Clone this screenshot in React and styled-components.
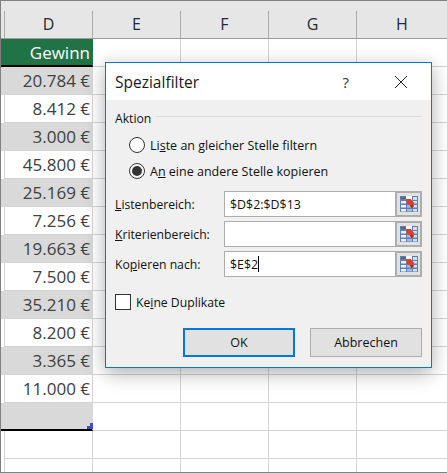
import React from 'react';
import styled, { createGlobalStyle } from 'styled-components';

const GlobalStyle = createGlobalStyle`
  html, body { margin: 0; padding: 0; background: #fff; }
  body { font-family: 'Open Sans', 'Noto Sans', sans-serif; }
`;

const values = ['20.784 €', '8.412 €', '3.000 €', '45.800 €', '25.169 €', '7.256 €', '19.663 €', '7.500 €', '35.210 €', '8.200 €', '3.365 €', '11.000 €'];
const columns = ['D', 'E', 'F', 'G', 'H'];

function RefIcon() {
    return (
        <svg width="18" height="16" viewBox="0 0 18 16">
            <rect x="0" y="0" width="18" height="16" fill="#5f80b4" />
            <rect x="1" y="1" width="5" height="2" fill="#5d6670" />
            <rect x="6" y="0" width="6" height="4" fill="#fafcfe" />
            <rect x="13" y="1" width="4" height="3" fill="#cfe0f2" />
            {[5, 9, 13].map(y => (
                <React.Fragment key={y}>
                    <rect x="1" y={y} width="5" height="2.5" fill="#eef3f9" />
                    <rect x="7" y={y} width="5" height="2.5" fill="#9dbce6" />
                    <rect x="13" y={y} width="4" height="2.5" fill="#cfe0f2" />
                </React.Fragment>
            ))}
            <path d="M6 3 L11 3 L12 5 L14.5 7 L13 9 L14 10 L11.5 12 L9.5 9 L7 8 Z" fill="#e23d22" />
            <path d="M10 9 L13 9 L14 10 L11.5 12 Z" fill="#a92a1b" />
        </svg>
    );
}

export default function App() {
    return (
        <Page>
            <GlobalStyle />
            <HeaderRow>
                <Stub />
                {columns.map(c => <ColumnHead key={c}>{c}</ColumnHead>)}
            </HeaderRow>
            <Row>
                <GreenCell>Gewinn</GreenCell>
                <Blank /><Blank /><Blank /><LastBlank />
            </Row>
            {values.map((v, i) => (
                <Row key={v}>
                    {i % 2 === 0 ? <ShadedCell>{v}</ShadedCell> : <ValueCell>{v}</ValueCell>}
                    <Blank /><Blank /><Blank /><LastBlank />
                </Row>
            ))}
            <Row>
                <SelectionEnd />
                <Blank /><Blank /><Blank /><LastBlank />
            </Row>
            <Row>
                <ValueCell />
                <Blank /><Blank /><Blank /><LastBlank />
            </Row>
            <Row>
                <ValueCell />
                <Blank /><Blank /><Blank /><LastBlank />
            </Row>

            <Dialog>
                <TitleBar>
                    <Title>Spezialfilter</Title>
                    <Help>?</Help>
                    <CloseIcon width="16" height="16" viewBox="0 0 16 16">
                        <path d="M2 2 L14 14 M14 2 L2 14" stroke="#222" strokeWidth="1" fill="none" />
                    </CloseIcon>
                </TitleBar>
                <Body>
                    <GroupHead>
                        <span>Aktion</span>
                        <GroupLine />
                    </GroupHead>
                    <RadioList>
                        <RadioRow>
                            <Radio />
                            <span>Li<u>s</u>te an gleicher Stelle filtern</span>
                        </RadioRow>
                        <RadioRow>
                            <Radio $checked />
                            <span>A<u>n</u> eine andere Stelle kopieren</span>
                        </RadioRow>
                    </RadioList>
                    <Fields>
                        <Field>
                            <FieldLabel><u>L</u>istenbereich:</FieldLabel>
                            <Input>$D$2:$D$13</Input>
                            <RefButton><RefIcon /></RefButton>
                        </Field>
                        <Field>
                            <FieldLabel><u>K</u>riterienbereich:</FieldLabel>
                            <Input />
                            <RefButton><RefIcon /></RefButton>
                        </Field>
                        <Field>
                            <FieldLabel>Ko<u>p</u>ieren nach:</FieldLabel>
                            <Input>$E$2<Caret /></Input>
                            <RefButton><RefIcon /></RefButton>
                        </Field>
                    </Fields>
                    <CheckRow>
                        <CheckBox />
                        <span>Ke<u>i</u>ne Duplikate</span>
                    </CheckRow>
                    <Buttons>
                        <Button $primary>OK</Button>
                        <Button>Abbrechen</Button>
                    </Buttons>
                </Body>
            </Dialog>
        </Page>
    );
}

const Page = styled.div`
  position: relative;
  width: 447px;
  height: 473px;
  box-sizing: border-box;
  overflow: hidden;
  background: #fff;
  border-top: 1px solid #808080;
  border-left: 1px solid #808080;
  border-bottom: 1px solid #808080;
`;

const HeaderRow = styled.div`
  display: grid;
  grid-template-columns: 4px 88px 88px 88px 88px 1fr;
  height: 37px;
  background: #e6e6e6;
  border-bottom: 1px solid #9c9c9c;
`;

const Stub = styled.div`
  margin-top: 10px;
  border-right: 1px solid #ababab;
`;

const ColumnHead = styled.div`
  margin-top: 10px;
  display: flex;
  align-items: center;
  justify-content: center;
  border-right: 1px solid #ababab;
  font-size: 16px;
  color: #1f2a36;
  padding-bottom: 2px;
  &:last-child { border-right: none; }
`;

const Row = styled.div`
  display: grid;
  grid-template-columns: 92px 88px 88px 88px 1fr;
  height: 28px;
`;

const Blank = styled.div`
  border-right: 1px solid #d4d4d4;
  border-bottom: 1px solid #d4d4d4;
`;

const LastBlank = styled(Blank)`
  border-right: none;
`;

const ValueCell = styled.div`
  display: flex;
  align-items: center;
  justify-content: flex-end;
  box-sizing: border-box;
  margin-left: 3px;
  padding-right: 2px;
  font-size: 17px;
  color: #404040;
  border-left: 1px solid #d4d4d4;
  border-right: 1px solid #d4d4d4;
  border-bottom: 1px solid #d4d4d4;
`;

const ShadedCell = styled(ValueCell)`
  margin-left: 0;
  border-left: none;
  background: #d9d9d9;
  border-right-color: #d9d9d9;
  border-bottom-color: #d4d4d4;
`;

const GreenCell = styled(ShadedCell)`
  background: #217346;
  color: #fff;
  border-right: 1px solid #217346;
  border-bottom: 2px solid #000;
  overflow: hidden;
`;

const SelectionEnd = styled(ShadedCell)`
  position: relative;
  border-bottom: 2px solid #000;
  &::after {
    content: '';
    position: absolute;
    right: -1px;
    bottom: 0;
    width: 6px;
    height: 6px;
    background: #3f51b5;
    clip-path: polygon(50% 0, 100% 0, 100% 100%, 0 100%, 0 50%, 50% 50%);
  }
`;

const Dialog = styled.div`
  position: absolute;
  left: 104px;
  top: 61px;
  width: 327px;
  height: 306px;
  box-sizing: border-box;
  display: flex;
  flex-direction: column;
  background: #f0f0f0;
  border: 1px solid #0078d7;
  box-shadow: 0 5px 18px rgba(0, 0, 0, 0.32);
  font-size: 12.2px;
  color: #111;
`;

const TitleBar = styled.div`
  display: flex;
  align-items: center;
  height: 37px;
  padding: 0 22px 0 9px;
  background: #fff;
`;

const Title = styled.div`
  flex: 1;
  font-size: 15.5px;
  color: #1a1a1a;
`;

const Help = styled.div`
  font-size: 15px;
  color: #333;
  margin-right: 44px;
`;

const CloseIcon = styled.svg`
  display: block;
`;

const Body = styled.div`
  flex: 1;
  padding: 9px 9px 0 9px;
`;

const GroupHead = styled.div`
  display: flex;
  align-items: center;
  gap: 5px;
  height: 18px;
`;

const GroupLine = styled.div`
  flex: 1;
  height: 1px;
  background: #dcdcdc;
  margin-top: -3px;
`;

const RadioList = styled.div`
  display: flex;
  flex-direction: column;
  padding-left: 14px;
  margin-top: 5px;
  font-size: 12.5px;
`;

const RadioRow = styled.div`
  display: flex;
  align-items: center;
  gap: 5px;
  height: 26px;
`;

const Radio = styled.div`
  position: relative;
  width: 16px;
  height: 16px;
  box-sizing: border-box;
  border-radius: 50%;
  border: 1px solid #333;
  background: #fff;
  &::after {
    content: '';
    display: ${props => props.$checked ? 'block' : 'none'};
    position: absolute;
    inset: 2px;
    border-radius: 50%;
    background: #333;
  }
`;

const Fields = styled.div`
  display: flex;
  flex-direction: column;
  gap: 4px;
  margin-top: 7px;
`;

const Field = styled.div`
  display: flex;
  align-items: center;
  height: 26px;
`;

const FieldLabel = styled.div`
  width: 109px;
`;

const Input = styled.div`
  display: flex;
  align-items: center;
  width: 171px;
  height: 26px;
  box-sizing: border-box;
  padding-left: 5px;
  background: #fff;
  border: 1px solid #adadad;
  border-width: 1px 0 1px 1px;
  font-size: 12.4px;
`;

const Caret = styled.span`
  display: inline-block;
  width: 1px;
  height: 16px;
  background: #000;
`;

const RefButton = styled.div`
  display: flex;
  align-items: center;
  justify-content: center;
  width: 27px;
  height: 26px;
  box-sizing: border-box;
  border: 2px solid #adadad;
  background: #e1e1e1;
`;

const CheckRow = styled.div`
  display: flex;
  align-items: center;
  gap: 5px;
  height: 16px;
  margin-top: 17px;
`;

const CheckBox = styled.div`
  width: 16px;
  height: 16px;
  box-sizing: border-box;
  border: 1px solid #333;
  background: #fff;
`;

const Buttons = styled.div`
  display: flex;
  justify-content: flex-end;
  gap: 15px;
  margin-top: 18px;
`;

const Button = styled.div`
  display: flex;
  align-items: center;
  justify-content: center;
  width: 112px;
  height: 29px;
  box-sizing: border-box;
  background: #e1e1e1;
  border: ${props => props.$primary ? '2px solid #0078d7' : '1px solid #adadad'};
  font-size: 12.5px;
`;
